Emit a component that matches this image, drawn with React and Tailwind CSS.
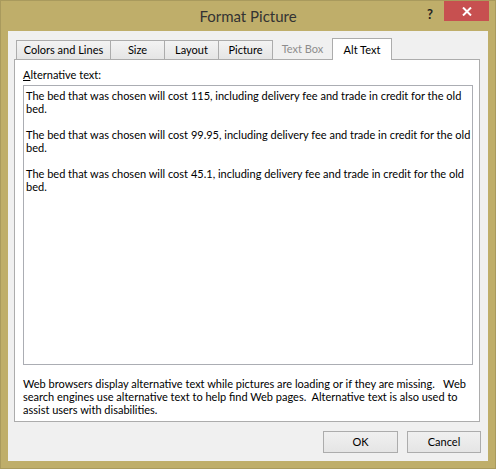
import React from 'react';

const font = { fontFamily: 'Lato, "Noto Sans", sans-serif' };

const paragraphs = ['115', '99.95', '45.1'];

const Tab = ({ label, width, first }) => (
  <div
    className={`h-[19px] ${width} ${first ? '' : '-ml-px'} flex items-center justify-center border-l border-t border-r border-[#acacac] bg-linear-to-b from-[#f3f3f3] to-[#e5e5e5] text-[11px] text-black`}
  >
    {label}
  </div>
);

export default function App() {
  return (
    <div
      className="w-[496px] h-[469px] bg-[#bfae6a] border border-[#a99a5d] flex flex-col overflow-hidden"
      style={font}
    >
      {/* title bar */}
      <div className="h-[30px] grid grid-cols-[1fr_auto_1fr] shrink-0">
        <div />
        <div className="pt-[5px] text-[15px] text-[#333333] leading-[20px]">Format Picture</div>
        <div className="flex justify-end items-start pr-[6px]">
          <span className="mt-[6px] mr-[11px] text-[13px] font-bold text-[#222] leading-[14px]">?</span>
          <button className="w-[45px] h-[20px] bg-[#c75050] flex items-center justify-center">
            <svg width="10" height="9" viewBox="0 0 10 9">
              <path d="M1 0.5 L9 8.5 M9 0.5 L1 8.5" stroke="white" strokeWidth="2" />
            </svg>
          </button>
        </div>
      </div>

      {/* dialog body */}
      <div className="mx-[7px] mb-[7px] flex-1 bg-[#f0f0f0] flex flex-col px-[6px] pt-[7px] pb-[8px]">
        <div className="flex items-end h-[21px] ml-[2px]">
          <Tab label="Colors and Lines" width="w-[95px]" first />
          <Tab label="Size" width="w-[55px]" />
          <Tab label="Layout" width="w-[55px]" />
          <Tab label="Picture" width="w-[55px]" />
          <div className="h-[19px] w-[59px] flex items-center justify-center text-[11px] text-[#8d8d8d]">
            Text Box
          </div>
          <div className="relative z-10 h-[22px] w-[60px] -mb-px flex items-start pt-[3px] justify-center border-l border-t border-r border-[#acacac] bg-white text-[11px] text-black">
            Alt Text
          </div>
        </div>

        <div className="w-[466px] h-[363px] bg-white border border-[#acacac] flex flex-col pl-[8px] pt-[8px]">
          <div className="text-[11px] leading-[14px] text-black">
            <span className="underline">A</span>lternative text:
          </div>
          <div className="mt-[3px] w-[450px] h-[280px] border border-[#abadb3] px-[2px] pt-[3px] text-[11px] leading-[13px] text-black">
            {paragraphs.map((p, i) => (
              <div key={p} className={i > 0 ? 'mt-[13px]' : ''}>
                <div className="whitespace-nowrap">
                  The bed that was chosen will cost {p}, including delivery fee and trade in credit for the old
                </div>
                <div>bed.</div>
              </div>
            ))}
          </div>
          <div className="mt-[12px] text-[11px] leading-[13px] text-black">
            <div className="whitespace-nowrap">
              Web browsers display alternative text while pictures are loading or if they are missing.&nbsp;&nbsp; Web
            </div>
            <div className="whitespace-nowrap">
              search engines use alternative text to help find Web pages.&nbsp; Alternative text is also used to
            </div>
            <div>assist users with disabilities.</div>
          </div>
        </div>

        <div className="mt-auto flex justify-end gap-[9px] pr-px">
          <button className="w-[75px] h-[22px] border border-[#acacac] bg-linear-to-b from-[#f0f0f0] to-[#e5e5e5] text-[11px] text-black">
            OK
          </button>
          <button className="w-[74px] h-[22px] border border-[#acacac] bg-linear-to-b from-[#f0f0f0] to-[#e5e5e5] text-[11px] text-black">
            Cancel
          </button>
        </div>
      </div>
    </div>
  );
}
